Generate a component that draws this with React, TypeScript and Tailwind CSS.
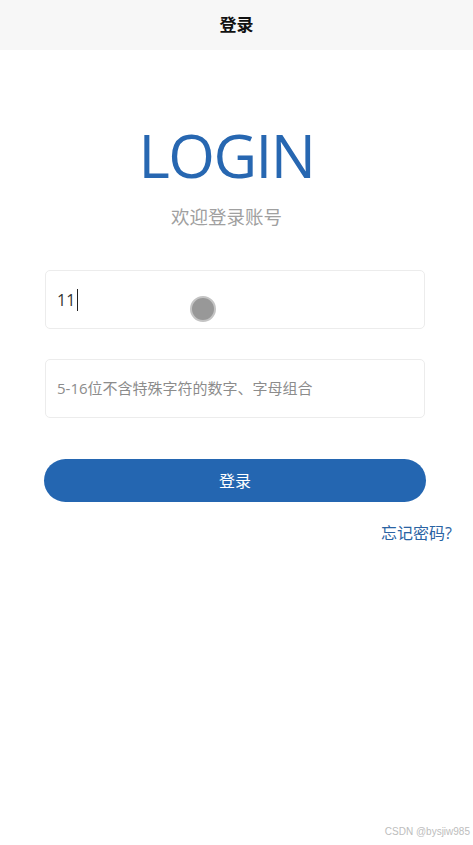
import React from "react";

export default function App() {
  const font = { fontFamily: '"Open Sans", "Noto Sans CJK SC", sans-serif' };
  return (
    <div className="relative w-[473px] h-[845px] bg-white overflow-hidden" style={font}>
      <div className="h-[50px] bg-[#f7f7f7] flex items-center justify-center">
        <span className="text-[17px] font-bold text-[#111]">登录</span>
      </div>

      <div className="flex flex-col items-center pr-[20px]">
        <div className="mt-[75px] h-[60px] text-[60px] leading-[60px] text-[#2767b1] tracking-[-1.5px]">
          LOGIN
        </div>
        <div className="mt-[20px] text-[18.5px] leading-[24px] text-[#a0a0a0]">欢迎登录账号</div>
      </div>

      <div className="pl-[45px] pr-[48px] mt-[41px] flex flex-col">
        <div className="h-[59px] rounded-[5px] border border-[#ececec] flex items-center pl-[11px]">
          <span className="text-[16px] text-[#333] font-medium">11</span>
          <span className="ml-[2px] w-[1px] h-[22px] bg-[#222]" />
        </div>
        <div className="mt-[30px] h-[59px] rounded-[5px] border border-[#ececec] flex items-center pl-[11px]">
          <span className="text-[15px] text-[#8c8c8c]">5-16位不含特殊字符的数字、字母组合</span>
        </div>
      </div>

      <div className="pl-[44px] pr-[47px] mt-[41px]">
        <div className="h-[43px] rounded-full bg-[#2466b1] flex items-center justify-center">
          <span className="text-[16px] text-white">登录</span>
        </div>
      </div>

      <div className="flex justify-end pr-[21px] mt-[19px]">
        <span className="text-[16px] text-[#2a63a3]">忘记密码?</span>
      </div>

      <div className="absolute left-[190px] top-[296px] w-[26px] h-[26px] rounded-full bg-[#989898] border-2 border-[#c4c4c4]" />

      <div className="absolute right-[3px] bottom-[6px] text-[10px] text-[#bdbdbd]" style={{ fontFamily: '"Liberation Sans", sans-serif' }}>
        CSDN @bysjiw985
      </div>
    </div>
  );
}
